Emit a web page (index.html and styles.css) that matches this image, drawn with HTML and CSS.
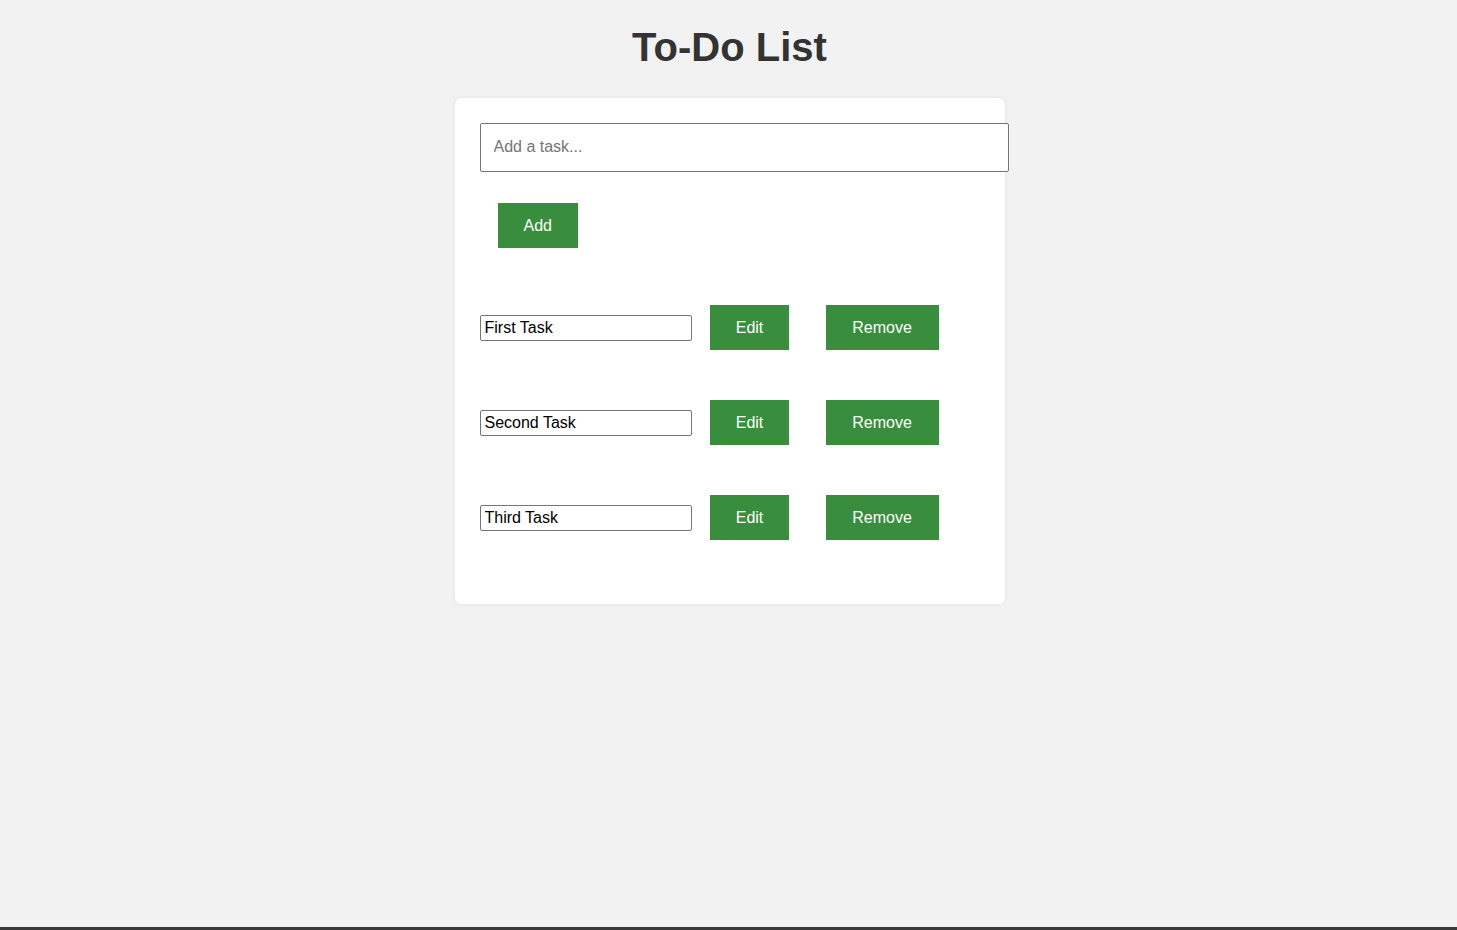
FILE: index.html
```html
<!DOCTYPE html>
<html lang="en">
<head>
<meta charset="utf-8">
<title>To-Do List</title>
<link rel="stylesheet" href="styles.css">
</head>
<body>
<h1 class="title">To-Do List</h1>
<main class="card">
  <input class="new-task" type="text" placeholder="Add a task...">
  <div class="add-row"><button class="btn">Add</button></div>
  <ul class="tasks">
    <li class="task"><input class="task-input" type="text" value="First Task"><button class="btn">Edit</button><button class="btn">Remove</button></li>
    <li class="task"><input class="task-input" type="text" value="Second Task"><button class="btn">Edit</button><button class="btn">Remove</button></li>
    <li class="task"><input class="task-input" type="text" value="Third Task"><button class="btn">Edit</button><button class="btn">Remove</button></li>
  </ul>
</main>
</body>
</html>
```
FILE: styles.css
```css
html { height: 100%; }
body {
  margin: 0;
  min-height: 100vh;
  box-sizing: border-box;
  background: #f2f2f2;
  font-family: "Liberation Sans", Arial, sans-serif;
  color: #333;
  padding-left: 2px;
  border-bottom: 3px solid #3a3a3a;
}
.title {
  margin: 24px 0 28px;
  font-size: 40px;
  line-height: 46px;
  text-align: center;
  font-weight: bold;
  color: #333;
}
.card {
  width: 500px;
  margin: 0 auto;
  background: #fff;
  border-radius: 6px;
  padding: 25px 25px 25px;
  box-shadow: 0 0 4px rgba(0,0,0,0.08);
}
.new-task {
  display: block;
  width: 100%;
  height: 45px;
  padding: 0 14px 2px 13px;
  border: 1px solid #767676;
  border-radius: 2px;
  font-family: "Liberation Sans", Arial, sans-serif;
  font-size: 16px;
  color: #000;
  outline: none;
}
.new-task::placeholder { color: #757575; }
.add-row {
  margin-top: 31px;
  padding-left: 18px;
  display: flex;
}
.btn {
  height: 45px;
  padding: 0 26px;
  border: none;
  background: #388e3c;
  color: #fff;
  font-family: "Liberation Sans", Arial, sans-serif;
  font-size: 16px;
  cursor: pointer;
}
.tasks {
  list-style: none;
  margin: 57px 0 0;
  padding: 0 0 39px;
  display: flex;
  flex-direction: column;
  gap: 50px;
}
.task {
  display: flex;
  align-items: center;
}
.task-input {
  width: 212px;
  height: 26px;
  box-sizing: border-box;
  padding: 1px 3px 1px 4px;
  border: 1px solid #767676;
  border-radius: 2px;
  font-family: "Liberation Sans", Arial, sans-serif;
  font-size: 16px;
  color: #000;
  margin-right: 18px;
}
.task .btn + .btn { margin-left: 37px; }
.task .btn:first-of-type { width: 79px; padding: 0 0 0 1px; }
.task .btn:last-of-type { width: 113px; padding: 0; }
```
